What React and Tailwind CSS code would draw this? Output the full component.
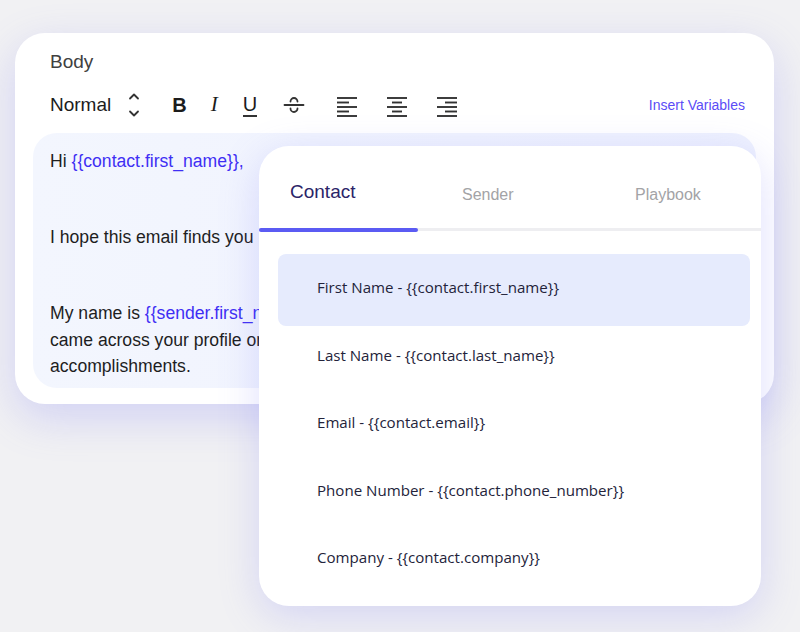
import React from "react";

const sans = { fontFamily: '"Liberation Sans", Arial, sans-serif' };

function Chevrons() {
  return (
    <svg width="14" height="28" viewBox="0 0 14 28" fill="none" stroke="#333" strokeWidth="1.8" strokeLinecap="round" strokeLinejoin="round">
      <path d="M3 7.5 L7 3.5 L11 7.5" />
      <path d="M3 20.5 L7 24.5 L11 20.5" />
    </svg>
  );
}

function Strike() {
  return (
    <svg width="22" height="22" viewBox="0 0 22 22" fill="none" stroke="#333" strokeWidth="1.8" strokeLinecap="round">
      <path d="M7.5 7.5 A3.5 3.5 0 0 1 14.5 7.5" />
      <path d="M1.5 11 H20.5" />
      <path d="M7.5 14.5 A3.5 3.5 0 0 0 14.5 14.5" />
    </svg>
  );
}

function Align({ kind }) {
  const longRows = [true, false, true, false, true];
  const ys = [3, 7.5, 12, 16.5, 21];
  return (
    <svg width="20" height="24" viewBox="0 0 20 24" fill="none" stroke="#333" strokeWidth="1.9">
      {longRows.map((long, i) => {
        let x1 = 0, x2 = 20;
        if (!long) {
          if (kind === "left") { x1 = 0; x2 = 12; }
          if (kind === "center") { x1 = 5; x2 = 15; }
          if (kind === "right") { x1 = 8; x2 = 20; }
        }
        return <line key={i} x1={x1} x2={x2} y1={ys[i]} y2={ys[i]} />;
      })}
    </svg>
  );
}

const items = [
  "First Name - {{contact.first_name}}",
  "Last Name - {{contact.last_name}}",
  "Email - {{contact.email}}",
  "Phone Number - {{contact.phone_number}}",
  "Company - {{contact.company}}",
];

export default function App() {
  return (
    <div className="relative w-[800px] h-[632px] overflow-hidden bg-[#f1f1f3]" style={sans}>
      {/* Editor card */}
      <div className="ml-[15px] pt-[33px]">
        <div className="w-[759px] h-[371px] rounded-[30px] bg-white px-[18px] pt-[18px] shadow-[0_14px_44px_rgba(110,110,245,0.24)]">
          <div className="pl-[17px] text-[19px] leading-[22px] text-[#404040]">Body</div>
          <div className="mt-[17px] h-[30px] flex items-center pl-[17px] pr-[11px] text-[#1c1c1c]">
            <span className="text-[19px]">Normal</span>
            <span className="ml-[16px] flex items-center"><Chevrons /></span>
            <span className="ml-[31px] text-[20px] font-bold">B</span>
            <span className="ml-[24px] text-[21px] italic" style={{ fontFamily: '"Liberation Serif", serif' }}>I</span>
            <span className="ml-[25px] text-[20px] leading-[22px] border-b-[2px] border-[#333]">U</span>
            <span className="ml-[26px] flex items-center"><Strike /></span>
            <span className="ml-[32px] flex items-center pt-[3px]"><Align kind="left" /></span>
            <span className="ml-[30px] flex items-center pt-[3px]"><Align kind="center" /></span>
            <span className="ml-[30px] flex items-center pt-[3px]"><Align kind="right" /></span>
            <span className="ml-auto text-[14px] text-[#5b4cf6]">Insert Variables</span>
          </div>
          <div className="mt-[13px] h-[255px] rounded-[24px] bg-gradient-to-r from-[#f3f6fe] to-[#eef1fe] pl-[17px] pt-[15px] text-[17.6px] leading-[26.5px] text-[#1e1e1e]">
            <div className="w-[209px] overflow-hidden whitespace-nowrap">
              <p>Hi <span className="text-[#3f2ff4]">{"{{contact.first_name}},"}</span></p>
              <p className="mt-[49.5px]">I hope this email finds you</p>
              <p className="mt-[49.5px]">My name is <span className="text-[#3f2ff4]">{"{{sender.first_name}}"}</span></p>
              <p>came across your profile on</p>
              <p>accomplishments.</p>
            </div>
          </div>
        </div>
      </div>

      {/* Variables dropdown */}
      <div className="absolute left-[259px] top-[146px] w-[502px] h-[460px] rounded-[30px] bg-white shadow-[0_10px_40px_rgba(110,110,245,0.22)] overflow-hidden">
        <div className="flex items-center h-[82px] pt-[11px]">
          <div className="w-[203px] pl-[31px] text-[19px] text-[#2b2468]">Contact</div>
          <div className="w-[173px] text-[16px] text-[#a3a3a6] pt-[4px]">Sender</div>
          <div className="text-[16px] text-[#a3a3a6] pt-[4px]">Playbook</div>
        </div>
        <div className="relative h-[3px] bg-[#eeeef1]">
          <div className="absolute left-0 top-[-0.5px] h-[4px] w-[159px] rounded-full bg-[#5b5bf3]" />
        </div>
        <div className="mt-[23px] pl-[19px] pr-[11px]" style={{ fontFamily: '"Open Sans", sans-serif' }}>
          {items.map((t, i) => (
            <div
              key={i}
              className={
                i === 0
                  ? "h-[72px] flex items-center pb-[6px] pl-[39px] rounded-[8px] bg-[#e6ebfd] text-[15.1px] text-[#23233a]"
                  : "h-[67.5px] flex items-center pb-[9px] pl-[39px] text-[15.1px] text-[#23233a]"
              }
            >
              {t}
            </div>
          ))}
        </div>
      </div>
    </div>
  );
}
